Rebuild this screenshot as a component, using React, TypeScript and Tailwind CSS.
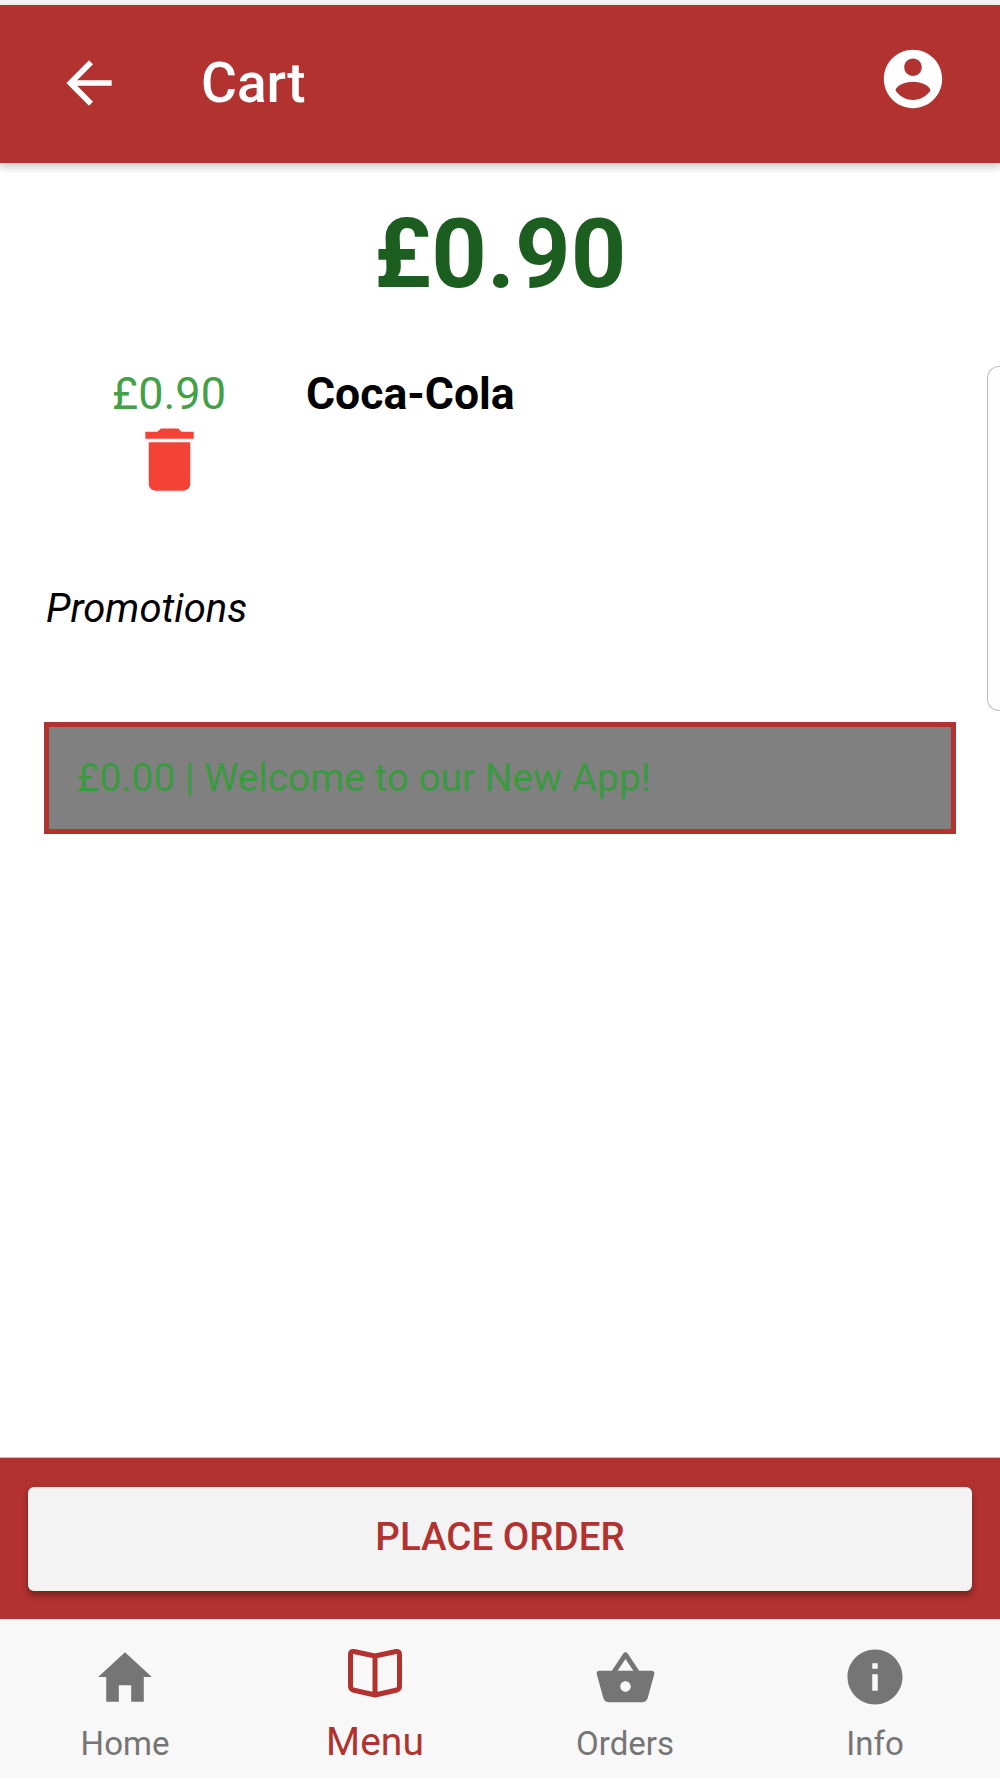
const RED = "#b1322f";

function Icon({ d, size, className, viewBox = "0 0 24 24" }: { d: string; size: number; className?: string; viewBox?: string }) {
  return (
    <svg width={size} height={size} viewBox={viewBox} fill="currentColor" className={className}>
      <path d={d} />
    </svg>
  );
}

function NavItem({ label, icon, active }: { label: string; icon: React.ReactNode; active?: boolean }) {
  return (
    <div className={`flex flex-col items-center ${active ? "text-[#b1322f]" : "text-[#757575]"}`}>
      <div className="h-[66px] w-[66px] mt-[25px] flex items-center justify-center">{icon}</div>
      {active ? (
        <span className="text-[39px] leading-[46px] mt-[9px] whitespace-nowrap">{label}</span>
      ) : (
        <span className="text-[33px] leading-[38px] mt-[15px] whitespace-nowrap">{label}</span>
      )}
    </div>
  );
}

export default function App() {
  return (
    <div className="relative h-[1778px] w-[1000px] overflow-hidden bg-white flex flex-col font-['Roboto',sans-serif]">
      <div className="h-[5px] bg-[#f4f4f4]" />
      <header className="relative z-10 h-[158px] bg-[#b1322f] text-white flex items-center pl-[55px] pr-[52px] shadow-[0_4px_8px_rgba(0,0,0,0.22)]">
        <Icon size={68} d="M20 11H7.83l5.59-5.59L12 4l-8 8 8 8 1.41-1.41L7.83 13H20v-2z" className="-mt-[2px]" />
        <h1 className="ml-[78px] text-[55px] leading-none font-medium -mt-[2px]">Cart</h1>
        <Icon size={70} className="ml-auto mb-[11px]" d="M12 2C6.48 2 2 6.48 2 12s4.48 10 10 10 10-4.48 10-10S17.52 2 12 2zm0 3c1.66 0 3 1.34 3 3s-1.34 3-3 3-3-1.34-3-3 1.34-3 3-3zm0 14.2c-2.5 0-4.71-1.28-6-3.22.03-1.99 4-3.08 6-3.08 1.99 0 5.97 1.09 6 3.08-1.29 1.94-3.5 3.22-6 3.22z" />
      </header>

      <main className="relative flex-1 flex flex-col">
        <div className="text-center text-[#1b5e20] font-bold text-[97px] leading-[120px] mt-[31px]">£0.90</div>

        <div className="flex mt-[53px] ml-[60px]">
          <div className="w-[218px] flex flex-col items-center">
            <span className="text-[#43a047] text-[45px] leading-[54px]">£0.90</span>
            <Icon size={83} className="text-[#f44336] -mt-[3px]" d="M6 19c0 1.1.9 2 2 2h8c1.1 0 2-.9 2-2V7H6v12zM19 4h-3.5l-1-1h-5l-1 1H5v2h14V4z" />
          </div>
          <span className="ml-[28px] text-black font-bold text-[44.5px] leading-[54px]">Coca-Cola</span>
        </div>

        <p className="italic text-black text-[40px] leading-[46px] ml-[46px] mt-[85px]">Promotions</p>

        <div className="mx-[44px] mt-[90px] h-[112px] bg-[#808080] border-[5px] border-[#b1322f] flex items-center pl-[28px]">
          <span className="text-[#3a9a40] text-[38.8px] leading-[46px]">£0.00 | Welcome to our New App!</span>
        </div>

        <div className="absolute right-0 top-[203px] h-[345px] w-[13px] bg-[#fdfdfd] border border-r-0 border-[#bdbdbd] rounded-l-[12px]" />
      </main>

      <div className="h-[162px] bg-[#b1322f] px-[28px] pt-[29px] border-t border-[#e5b5b3]">
        <button className="w-full h-[104px] bg-[#f3f3f4] rounded-[6px] text-[#b1322f] text-[38.5px] font-medium pb-[4px] shadow-[0_4px_6px_rgba(0,0,0,0.35)]">
          PLACE ORDER
        </button>
      </div>
      <nav className="h-[159px] bg-[#f8f8f8] grid grid-cols-4">
        <NavItem label="Home" icon={<Icon size={66} viewBox="0 0 512 512" d="M208 448V320h96v128h97.6V256H464L256 64 48 256h62.4v192z" />} />
        <NavItem active label="Menu" icon={<svg width={66} height={66} viewBox="0 0 66 66" fill="none" stroke={RED} strokeWidth={5} strokeLinejoin="round"><path d="M33 12 L12 7.5 Q8.5 7 8.5 10.5 V42 Q8.5 45 11 46 L33 51 L55 46 Q57.5 45 57.5 42 V10.5 Q57.5 7 54 7.5 Z M33 12 V51" /></svg>} />
        <NavItem label="Orders" icon={<Icon size={63} className="mt-[2px]" d="M17.21 9l-4.38-6.56c-.19-.28-.51-.42-.83-.42-.32 0-.64.14-.83.43L6.79 9H2c-.55 0-1 .45-1 1 0 .09.01.18.04.27l2.54 9.27c.23.84 1 1.46 1.92 1.46h13c.92 0 1.69-.62 1.93-1.46l2.54-9.27L23 10c0-.55-.45-1-1-1h-4.79zM9 9l3-4.4L15 9H9zm3 8c-1.1 0-2-.9-2-2s.9-2 2-2 2 .9 2 2-.9 2-2 2z" />} />
        <NavItem label="Info" icon={<Icon size={66} d="M12 2C6.48 2 2 6.48 2 12s4.48 10 10 10 10-4.48 10-10S17.52 2 12 2zm1 15h-2v-6h2v6zm0-8h-2V7h2v2z" />} />
      </nav>
    </div>
  );
}
